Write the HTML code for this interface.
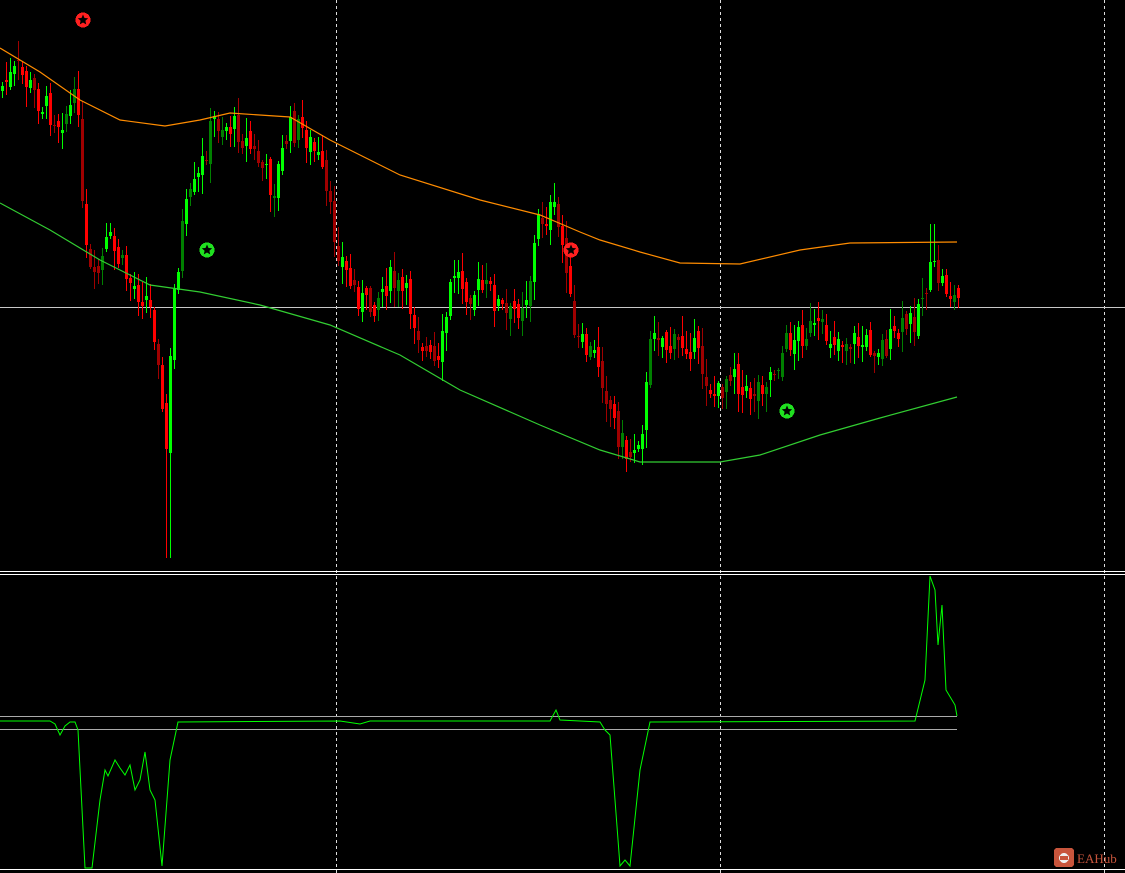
<!DOCTYPE html>
<html><head><meta charset="utf-8"><style>
html,body{margin:0;padding:0;background:#000;width:1125px;height:873px;overflow:hidden}
svg{display:block}
</style></head><body>
<svg id="s" width="1125" height="873" viewBox="0 0 1125 873" xmlns="http://www.w3.org/2000/svg" shape-rendering="crispEdges">
<rect width="1125" height="873" fill="#000"/>
<g stroke="#ddd" stroke-width="1" stroke-dasharray="3,3">
<line x1="336.5" y1="0" x2="336.5" y2="873"/>
<line x1="720.5" y1="0" x2="720.5" y2="873"/>
<line x1="1104.5" y1="0" x2="1104.5" y2="873"/>
</g>
<line x1="0" y1="307.5" x2="1125" y2="307.5" stroke="#c8c8c8"/>
<g id="candles"></g>
<polyline id="ma1" fill="none" stroke="#ff8c00" stroke-width="1.2" shape-rendering="auto"/>
<polyline id="ma2" fill="none" stroke="#32cd32" stroke-width="1.2" shape-rendering="auto"/>
<rect x="0" y="571" width="1125" height="1" fill="#fff"/>
<rect x="0" y="574" width="1125" height="1" fill="#fff"/>
<line x1="0" y1="716.5" x2="957" y2="716.5" stroke="#aaa"/>
<line x1="0" y1="729.5" x2="957" y2="729.5" stroke="#aaa"/>
<polyline id="ind" fill="none" stroke="#00ff00" stroke-width="1" shape-rendering="auto"/>
<rect x="0" y="869" width="1125" height="1" fill="#fff"/>
<g id="stars"></g>
<rect x="1054" y="848" width="20" height="19" rx="3" fill="#c8553c"/>
<circle cx="1064" cy="858" r="5" fill="#eee"/>
<rect x="1060" y="856" width="8" height="4" fill="#c8553c"/>
<text x="1077" y="863" font-family="Liberation Serif, serif" font-size="13" fill="#c8553c">EAHub</text>
</svg>
<script>
function interp(pts,x){for(let i=0;i<pts.length-1;i++){const a=pts[i],b=pts[i+1];if(x>=a[0]&&x<=b[0]){return a[1]+(b[1]-a[1])*(x-a[0])/(b[0]-a[0]);}}return pts[pts.length-1][1];}
const price=[[0,90],[20,70],[40,100],[60,120],[80,100],[85,240],[95,290],[110,240],[130,280],[150,300],[160,350],[167,470],[175,300],[185,220],[200,180],[215,120],[240,130],[260,160],[275,190],[290,130],[305,130],[320,160],[335,230],[350,280],[370,310],[390,280],[410,300],[430,360],[440,370],[455,270],[470,290],[490,290],[510,320],[530,290],[540,220],[555,210],[568,260],[575,340],[600,360],[615,420],[630,460],[645,420],[655,320],[670,350],[690,340],[705,370],[718,400],[735,360],[745,400],[755,390],[775,370],[790,340],[810,330],[830,335],[850,340],[870,345],[890,345],[905,330],[915,320],[925,290],[935,270],[957,300]];
const ma1=[[0,48],[40,72],[80,100],[120,120],[165,126],[200,120],[230,113],[290,117],[330,140],[370,160],[400,175],[480,200],[540,215],[580,232],[600,240],[640,252],[680,263],[740,264],[800,250],[850,243],[957,242]];
const ma2=[[0,203],[50,230],[100,260],[150,285],[200,292],[260,305],[330,325],[400,355],[460,390],[540,425],[600,450],[640,462],[720,462],[760,455],[820,435],[880,418],[957,397]];
const ind=[[0,721],[50,721],[55,724],[60,735],[65,726],[70,722],[75,722],[78,730],[85,868],[92,868],[100,800],[105,770],[108,776],[115,760],[120,768],[125,775],[130,765],[135,790],[140,780],[145,752],[150,790],[155,800],[162,866],[170,760],[178,722],[340,721],[360,724],[370,721],[550,721],[556,710],[560,720],[600,722],[605,730],[610,735],[615,800],[620,866],[625,860],[630,866],[640,770],[650,722],[915,721],[925,680],[930,576],[935,590],[938,645],[942,605],[946,690],[955,705],[957,716]];
const pl=p=>p.map(q=>q.join(',')).join(' ');
document.getElementById('ma1').setAttribute('points',pl(ma1));
document.getElementById('ma2').setAttribute('points',pl(ma2));
document.getElementById('ind').setAttribute('points',pl(ind));
let seed=7;function rnd(){seed=(seed*9301+49297)%233280;return seed/233280;}
let h='';
let prev=interp(price,0);
for(let x=1;x<=957;x+=4){
 let c=interp(price,x+3)+(rnd()-0.5)*30;
 let o=prev+(rnd()-0.5)*14;
 let top=Math.min(o,c),bot=Math.max(o,c);
 let hi=top-rnd()*18-2,lo=bot+rnd()*18+2;
 if(x>=164&&x<=170)lo=558;
 if(x>=929&&x<=934)hi=224;
 let bull=c<o;
 let dark=rnd()<0.35;
 let col=bull?(dark?'#008000':'#00ff00'):(dark?'#a00000':'#ff0000');
 h+=`<rect x="${x+1}" y="${hi.toFixed(0)}" width="1" height="${(lo-hi).toFixed(0)}" fill="${col}"/>`;
 h+=`<rect x="${x}" y="${top.toFixed(0)}" width="3" height="${Math.max(1,bot-top).toFixed(0)}" fill="${col}"/>`;
 prev=c;
}
document.getElementById('candles').innerHTML=h;
function star(cx,cy,col){let p=[];for(let i=0;i<10;i++){let r=i%2?2.5:5.5,a=-Math.PI/2+i*Math.PI/5;p.push((cx+r*Math.cos(a)).toFixed(1)+','+(cy+r*Math.sin(a)).toFixed(1));}
return `<circle cx="${cx}" cy="${cy}" r="7.5" fill="${col}"/><polygon points="${p.join(' ')}" fill="#000" shape-rendering="auto"/>`;}
document.getElementById('stars').innerHTML=star(83,20,'#ff2020')+star(571,250,'#ff2020')+star(207,250,'#20e020')+star(787,411,'#20e020');
</script>
</body></html>
